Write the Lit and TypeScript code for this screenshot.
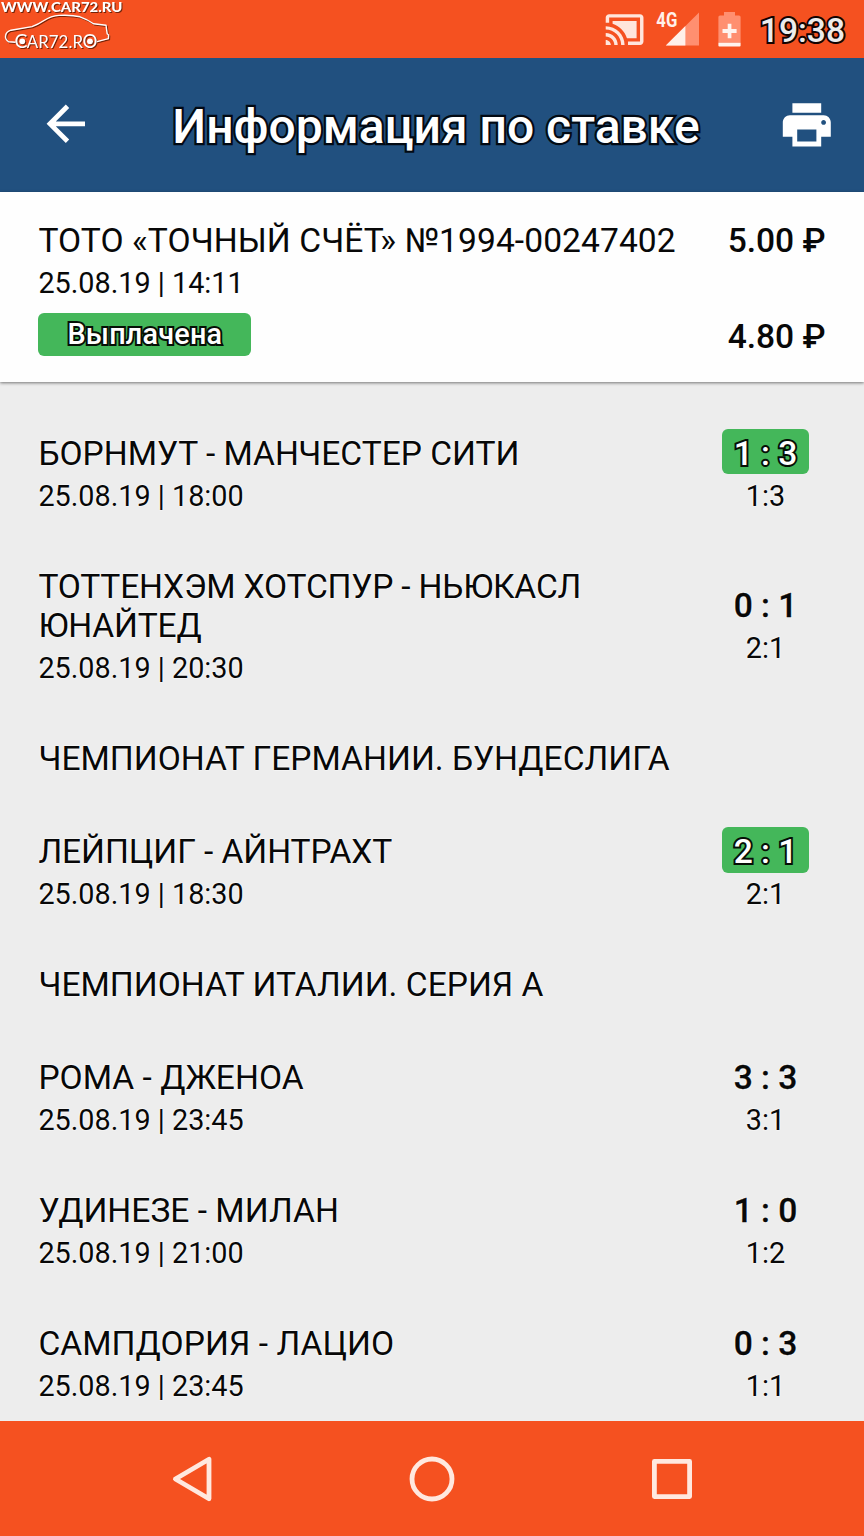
import { LitElement, html, css } from "lit";
import { customElement, property } from "lit/decorators.js";
import { styleMap } from "lit/directives/style-map.js";

interface Match {
  kind: "match";
  teams: string;
  date: string;
  result: string;
  pick: string;
  hit?: boolean;
  tracking?: number;
}
interface League {
  kind: "league";
  name: string;
}
type Row = Match | League;

const ROWS: Row[] = [
  { kind: "match", teams: "БОРНМУТ - МАНЧЕСТЕР СИТИ", date: "25.08.19 | 18:00", result: "1 : 3", pick: "1:3", hit: true, tracking: -0.04 },
  { kind: "match", teams: "ТОТТЕНХЭМ ХОТСПУР - НЬЮКАСЛ ЮНАЙТЕД", date: "25.08.19 | 20:30", result: "0 : 1", pick: "2:1", tracking: -0.2 },
  { kind: "league", name: "ЧЕМПИОНАТ ГЕРМАНИИ. БУНДЕСЛИГА" },
  { kind: "match", teams: "ЛЕЙПЦИГ - АЙНТРАХТ", date: "25.08.19 | 18:30", result: "2 : 1", pick: "2:1", hit: true, tracking: -0.08 },
  { kind: "league", name: "ЧЕМПИОНАТ ИТАЛИИ. СЕРИЯ А" },
  { kind: "match", teams: "РОМА - ДЖЕНОА", date: "25.08.19 | 23:45", result: "3 : 3", pick: "3:1" },
  { kind: "match", teams: "УДИНЕЗЕ - МИЛАН", date: "25.08.19 | 21:00", result: "1 : 0", pick: "1:2" },
  { kind: "match", teams: "САМПДОРИЯ - ЛАЦИО", date: "25.08.19 | 23:45", result: "0 : 3", pick: "1:1", tracking: 0.05 },
];

@customElement("status-bar")
class StatusBar extends LitElement {
  static styles = css`
    :host {
      display: flex;
      justify-content: space-between;
      height: 57.5px;
      background: #f55120;
      font-family: Roboto, sans-serif;
    }
    .logo { display: block; overflow: visible; filter: drop-shadow(1px 1px 0.6px rgba(70, 20, 0, 0.75)); }
    .right { display: flex; align-items: center; padding: 2px 19px 0 0; }
    .cast { display: block; margin-right: 11px; }
    .signal { display: block; overflow: visible; margin-right: 19.5px; }
    .battery { display: block; margin-right: 18.5px; }
    .clock {
      margin-top: 2px;
      font-size: 33.6px;
      font-weight: 500;
      line-height: 40px;
      color: #ececec;
      -webkit-text-stroke: 4px #140300;
      paint-order: stroke fill;
    }
  `;
  render() {
    return html`
      <svg class="logo" width="130" height="56" viewBox="0 0 130 56" fill="#fff">
        <text x="1" y="11.8" font-family="Lato, sans-serif" font-weight="900" font-size="14" textLength="121.5" lengthAdjust="spacingAndGlyphs">WWW.CAR72.RU</text>
        <path d="M15.5 42.2 L8.5 41.8 Q4.8 39 5.6 35.5 Q6.4 31.5 11 30.2 L32 26.6 Q38 24.5 44 20.5 Q51 16 59 15.4 Q72 14.8 80 16.8 Q88 19.6 93.5 23.8 L106 25.2 L107.2 33.8 L108.6 35 L108.4 38.6 L97 41.6" fill="none" stroke="#fff" stroke-width="1.4" stroke-linejoin="round"/>
        <g font-family="Lato, sans-serif">
          <text x="14.6" y="48" font-size="18.5" textLength="13" lengthAdjust="spacingAndGlyphs">C</text>
          <text x="26.8" y="47.7" font-size="16.8" textLength="56.2" lengthAdjust="spacingAndGlyphs">AR72.R</text>
          <text x="82.5" y="48" font-size="18.5" textLength="15" lengthAdjust="spacingAndGlyphs">O</text>
        </g>
        <circle cx="22.3" cy="41.3" r="2.9"/>
        <circle cx="90" cy="41.3" r="2.9"/>
      </svg>
      <div class="right">
        <svg class="cast" width="41.2" height="41.2" viewBox="0 0 24 24" fill="#ffe6dc">
          <path d="M1 18v3h3c0-1.66-1.34-3-3-3zm0-4v2c2.76 0 5 2.24 5 5h2c0-3.87-3.13-7-7-7zm18-7H5v1.63c3.96 1.28 7.09 4.41 8.37 8.37H19V7zM1 10v2c4.97 0 9 4.03 9 9h2c0-6.08-4.93-11-11-11zm20-7H3c-1.1 0-2 .9-2 2v3h2V5h18v14h-7v2h7c1.1 0 2-.9 2-2V5c0-1.1-.9-2-2-2z"/>
        </svg>
        <svg class="signal" width="43" height="36" viewBox="0 0 43 36">
          <path d="M43 .5V33.6H9.8z" fill="#ff8f70"/>
          <path d="M29.4 14.1V33.6H9.8z" fill="#fff0ea"/>
          <text x="0.3" y="15.3" fill="#fff0ea" font-family="Roboto, sans-serif" font-weight="700" font-size="20" textLength="21" lengthAdjust="spacingAndGlyphs">4G</text>
        </svg>
        <svg class="battery" width="23" height="36" viewBox="0 0 23 36">
          <path d="M6 0h11v3.4h4q1.6 0 1.6 1.6V30H0.4V5q0-1.6 1.6-1.6h4z" fill="#ff8f70"/>
          <path d="M0.4 30.4h22.2v3q0 1-1 1H1.4q-1 0-1-1z" fill="#fff3ee"/>
          <path d="M9.7 11.8h3.7v5.3h5.2v3.8h-5.2v5.3H9.7v-5.3H4.5v-3.8h5.2z" fill="#fff3ee"/>
        </svg>
        <span class="clock">19:38</span>
      </div>
    `;
  }
}

@customElement("title-bar")
class TitleBar extends LitElement {
  static styles = css`
    :host {
      display: flex;
      align-items: center;
      justify-content: space-between;
      height: 134.5px;
      box-sizing: border-box;
      padding: 0 28.9px 0.6px 36.8px;
      background: #21507f;
      font-family: Roboto, sans-serif;
    }
    .icon { display: block; width: 57.6px; height: 57.6px; fill: #fff; }
    .back { margin-top: -1px; }
    .title {
      margin: 6px 0 0;
      font-size: 48px;
      line-height: 56px;
      font-weight: 500;
      color: #fff;
      white-space: nowrap;
      -webkit-text-stroke: 4.4px #020a14;
      paint-order: stroke fill;
    }
  `;
  render() {
    return html`
      <svg class="icon back" viewBox="0 0 24 24"><path d="M20 11H7.83l5.59-5.59L12 4l-8 8 8 8 1.41-1.41L7.83 13H20v-2z"/></svg>
      <h1 class="title">Информация по ставке</h1>
      <svg class="icon" viewBox="0 0 24 24"><path d="M19 8H5c-1.66 0-3 1.34-3 3v6h4v4h12v-4h4v-6c0-1.66-1.34-3-3-3zm-3 11H8v-5h8v5zm3-7c-.55 0-1-.45-1-1s.45-1 1-1 1 .45 1 1-.45 1-1 1zm-1-9H6v4h12V3z"/></svg>
    `;
  }
}

@customElement("bet-summary")
class BetSummary extends LitElement {
  static styles = css`
    :host {
      display: flex;
      justify-content: space-between;
      height: 189.5px;
      box-sizing: border-box;
      padding: 28.8px 38.4px 25px;
      background: #fefefe;
      box-shadow: 0 1px 3px rgba(0, 0, 0, 0.5);
      position: relative;
      font-family: Roboto, sans-serif;
      color: #080808;
    }
    .name { font-size: 33.6px; line-height: 39.4px; letter-spacing: 0.07px; white-space: nowrap; }
    .date { font-size: 28.8px; line-height: 33.8px; margin-top: 6.9px; }
    .status {
      width: 213px;
      height: 43px;
      margin-top: 12px;
      border-radius: 6px;
      background: #44b75a;
      color: #fff;
      font-size: 28.8px;
      line-height: 43px;
      font-weight: 500;
      letter-spacing: 0.2px;
      text-align: center;
      -webkit-text-stroke: 4px #061006;
      paint-order: stroke fill;
    }
    .sums {
      display: flex;
      flex-direction: column;
      justify-content: space-between;
      font-size: 33.6px;
      line-height: 39.4px;
      font-weight: 500;
      text-align: right;
      white-space: nowrap;
    }
  `;
  render() {
    return html`
      <div>
        <div class="name">ТОТО «ТОЧНЫЙ СЧЁТ» №1994-00247402</div>
        <div class="date">25.08.19 | 14:11</div>
        <div class="status">Выплачена</div>
      </div>
      <div class="sums"><span>5.00 ₽</span><span>4.80 ₽</span></div>
    `;
  }
}

@customElement("bet-row")
class BetRow extends LitElement {
  @property({ attribute: false }) row!: Row;
  static styles = css`
    :host {
      display: flex;
      align-items: center;
      justify-content: space-between;
      padding: 26.9px 38.4px;
      font-family: Roboto, sans-serif;
      color: #080808;
      text-shadow: 0 0 2px #fff, 0 0 2px #fff;
    }
    .name { font-size: 33.6px; line-height: 39.4px; max-width: 645px; }
    .date { font-size: 28.8px; line-height: 33.8px; margin: 6.7px 0 -0.8px; }
    .score {
      display: flex;
      flex-direction: column;
      align-items: center;
      width: 87px;
      margin: -8.2px 16.6px -4px 0;
    }
    .result {
      width: 87px;
      height: 45.4px;
      border-radius: 6px;
      font-size: 33.6px;
      line-height: 50.2px;
      font-weight: 500;
      text-align: center;
      white-space: nowrap;
      -webkit-text-stroke: 0.3px #080808;
    }
    .hit {
      background: #44b75a;
      color: #fff;
      text-shadow: none;
      -webkit-text-stroke: 4px #061006;
      paint-order: stroke fill;
    }
    .pick { font-size: 28.8px; line-height: 33.8px; margin-top: 5.6px; }
  `;
  render() {
    const r = this.row;
    if (r.kind === "league") return html`<div class="name">${r.name}</div>`;
    return html`
      <div class="info">
        <div class="name" style=${styleMap({ letterSpacing: `${r.tracking ?? 0}px` })}>${r.teams}</div>
        <div class="date">${r.date}</div>
      </div>
      <div class="score">
        <div class="result ${r.hit ? "hit" : ""}">${r.result}</div>
        <div class="pick">${r.pick}</div>
      </div>
    `;
  }
}

@customElement("nav-bar")
class NavBar extends LitElement {
  static styles = css`
    :host {
      display: grid;
      grid-template-columns: repeat(3, 240px);
      justify-content: center;
      align-items: center;
      justify-items: center;
      height: 115px;
      background: #f55120;
      position: relative;
    }
    .key { display: block; fill: none; stroke: #ffe8df; stroke-width: 4.8; stroke-linejoin: round; }
  `;
  render() {
    return html`
      <svg class="key" width="48" height="48" viewBox="0 0 48 48"><path d="M7.4 24L41 4.2V43.8z"/></svg>
      <svg class="key" width="48" height="48" viewBox="0 0 48 48"><circle cx="24" cy="24" r="20"/></svg>
      <svg class="key" width="48" height="48" viewBox="0 0 48 48"><rect x="6.4" y="6.4" width="35.2" height="35.2"/></svg>
    `;
  }
}

@customElement("app-root")
class AppRoot extends LitElement {
  static styles = css`
    :host {
      display: flex;
      flex-direction: column;
      width: 864px;
      height: 1536px;
      overflow: hidden;
      background: #ededed;
    }
    .list { flex: 1; min-height: 0; overflow: hidden; padding-top: 25.4px; }
  `;
  render() {
    return html`
      <status-bar></status-bar>
      <title-bar></title-bar>
      <bet-summary></bet-summary>
      <div class="list">${ROWS.map((row) => html`<bet-row .row=${row}></bet-row>`)}</div>
      <nav-bar></nav-bar>
    `;
  }
}
